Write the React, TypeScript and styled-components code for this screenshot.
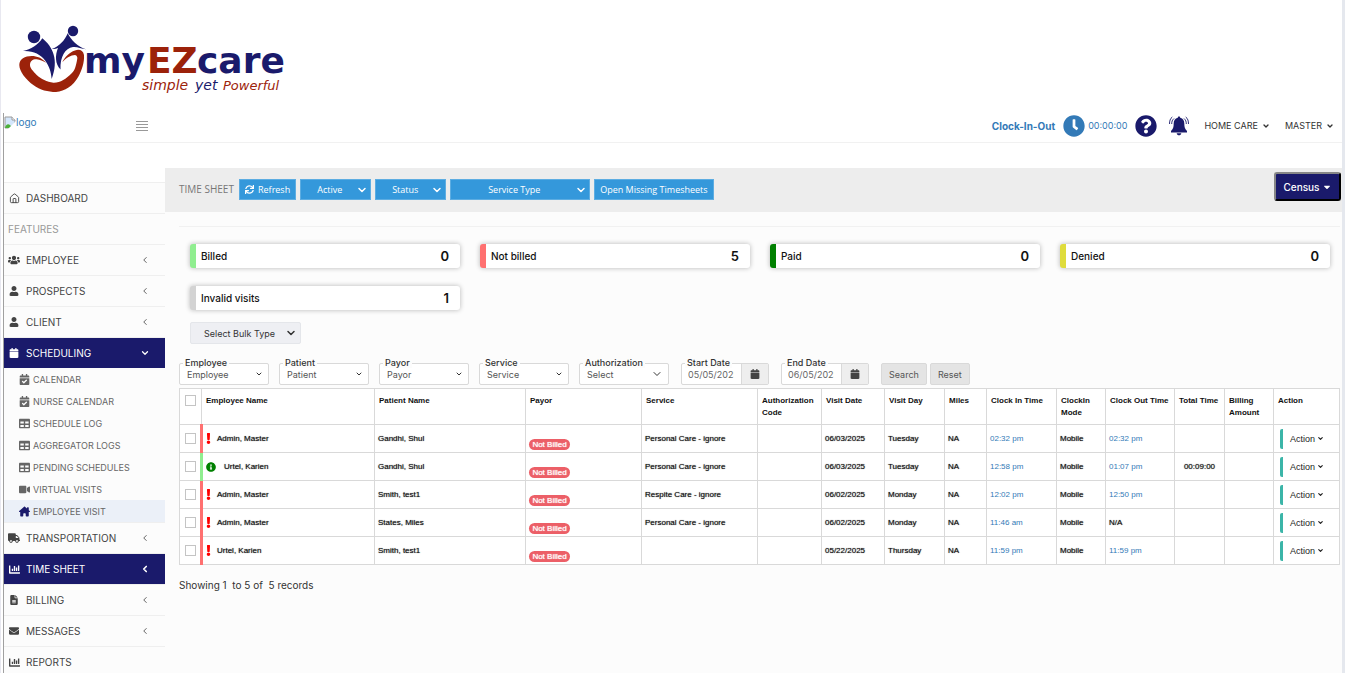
import React from "react";
import styled, { createGlobalStyle } from "styled-components";
import {
  FaUsers, FaUser, FaCalendar, FaCalendarCheck, FaTable, FaVideo, FaTruck, FaChartBar, FaEnvelope,
  FaClock, FaQuestionCircle, FaSync, FaExclamation, FaInfoCircle, FaCaretDown,
} from "react-icons/fa";
import { FaHouseChimney, FaFileLines } from "react-icons/fa6";
import { ChevronDown, ChevronLeft, House } from "lucide-react";

const ui = `Inter, "Open Sans", sans-serif`;
const navy = "#1a1a6b";
const line = "#d9d9d9";

const GlobalStyle = createGlobalStyle`
  *, *::before, *::after { box-sizing: border-box; }
  body { margin: 0; background: #fff; font-family: ${ui}; font-size: 10px; color: #333; }
  button, input, select { font-family: inherit; font-size: inherit; color: inherit; margin: 0; }
  a { color: inherit; text-decoration: none; }
  ul { list-style: none; margin: 0; padding: 0; }
  svg { display: block; flex: none; }
`;

const Page = styled.div`
  height: 100vh;
  overflow: hidden;
  display: flex;
  flex-direction: column;
  border-left: 1px solid #e8e8f0;
  border-right: 3px solid #e5e8ee;
`;
const Brand = styled.div`
  flex: none;
  height: 113px;
  padding: 20px 16px;
`;
const Frame = styled.div`
  flex: 1;
  min-height: 0;
  display: flex;
  flex-direction: column;
  margin-left: 2px;
  border-left: 1px solid #a0a0a0;
`;
const Header = styled.header`
  flex: none;
  height: 30px;
  display: flex;
  align-items: center;
  padding: 0 8px 4px 0;
  border-bottom: 1px solid #f1f1f1;
`;
const LogoLink = styled.a`
  display: flex;
  width: 132px;
  height: 20px;
  font-size: 10px;
  line-height: 13px;
  color: #337ab7;
`;
const MenuButton = styled.button`
  border: 0;
  padding: 0;
  background: none;
  margin-right: auto;
`;
const ClockLink = styled.a`
  display: flex;
  align-items: center;
  color: #337ab7;
  strong { margin-right: 8px; }
  span { margin-left: 3px; font-size: 9px; }
`;
const IconButton = styled.button<{ $gap: number }>`
  border: 0;
  padding: 0;
  background: none;
  color: ${navy};
  margin-left: ${(p) => p.$gap}px;
`;
const HeaderMenu = styled.button`
  display: flex;
  align-items: center;
  gap: 4px;
  border: 0;
  padding: 0;
  background: none;
  font-size: 9px;
  margin-left: 15px;
`;

const Body = styled.div`
  flex: 1;
  min-height: 0;
  display: flex;
`;
const Sidebar = styled.nav`
  flex: none;
  width: 161px;
  padding-top: 39px;
  overflow: hidden;
  background: linear-gradient(#fff 39px, #fcfcfc 39px);
`;
const NavItem = styled.a<{ $active?: boolean }>`
  display: flex;
  align-items: center;
  height: 31px;
  padding: 0 15px 0 4px;
  border-top: 1px solid #efefef;
  color: ${(p) => (p.$active ? "#fff" : "#444")};
  background: ${(p) => (p.$active ? navy : "transparent")};
  span { flex: 1; margin-left: 6px; }
`;
const NavIcon = styled.i`
  width: 12px;
  display: flex;
  justify-content: center;
`;
const Section = styled.div`
  height: 31px;
  line-height: 31px;
  padding-left: 4px;
  border-top: 1px solid #efefef;
  color: #999;
`;
const SubItem = styled.a<{ $active?: boolean }>`
  display: flex;
  align-items: center;
  gap: 3px;
  height: 22px;
  padding-left: 15px;
  font-size: 9px;
  color: #666;
  background: ${(p) => (p.$active ? "#ebf0f8" : "transparent")};
  svg { width: 11px; height: 11px; color: ${(p) => (p.$active ? navy : "#666")}; }
`;

const Main = styled.main`
  flex: 1;
  min-width: 0;
  margin-top: 25px;
  background: #fcfcfc;
`;
const TitleBar = styled.div`
  height: 44px;
  display: flex;
  gap: 4px;
  padding: 4px 1px 0 14px;
  background: #ededed;
  font-family: "Open Sans", sans-serif;
`;
const Title = styled.h1`
  width: 56px;
  margin: 0;
  font-size: 10px;
  line-height: 34px;
  font-weight: 400;
  white-space: nowrap;
  color: #777;
`;
const BlueButton = styled.button`
  display: flex;
  align-items: center;
  gap: 4px;
  height: 21px;
  margin-top: 7px;
  padding: 0 5px;
  border: 1px solid #5dade2;
  background: #3498db;
  color: #fff;
  font-size: 9px;
  white-space: nowrap;
`;
const SelectBox = styled.div`
  display: grid;
  align-items: center;
  > * { grid-area: 1 / 1; }
  > svg { justify-self: end; margin-right: 5px; pointer-events: none; }
  select { appearance: none; width: 100%; height: 100%; border: 0; background: none; border-radius: 2px; outline: 0; }
`;
const BlueSelect = styled(SelectBox)<{ $width: number; $pad: number }>`
  width: ${(p) => p.$width}px;
  height: 21px;
  margin-top: 7px;
  background: #3498db;
  color: #fff;
  border: 1px solid #5dade2;
  > svg { margin-right: 2px; }
  select { padding: 0 0 0 ${(p) => p.$pad}px; font-size: 9px; option { color: #333; } }
`;
const CensusButton = styled.button`
  display: flex;
  align-items: center;
  justify-content: center;
  gap: 2px;
  width: 67px;
  height: 29px;
  margin-left: auto;
  border: 2px outset #333;
  border-radius: 3px;
  background: ${navy};
  color: #fff;
  font-family: ${ui};
  font-weight: 500;
`;
const Content = styled.div`
  margin: 14px 2px 0 14px;
  border-top: 1px solid #f1f1f1;
`;
const Cards = styled.div`
  display: grid;
  grid-template-columns: repeat(4, 1fr);
  gap: 18px 20px;
  padding: 17px 10px 0 11px;
`;
const Card = styled.div<{ $color: string }>`
  display: flex;
  align-items: center;
  justify-content: space-between;
  height: 24px;
  padding: 0 11px 0 5px;
  border-left: 6px solid ${(p) => p.$color};
  border-radius: 3px;
  background: #fff;
  box-shadow: 0 0 5px #b5b5b5;
  color: #111;
  font-weight: 500;
  strong { font-size: 13px; font-weight: 600; }
`;
const BulkSelect = styled(SelectBox)`
  width: 111px;
  height: 22px;
  margin: 12px 0 0 11px;
  border: 1px solid #e4e6ea;
  border-radius: 2px;
  background: #eeeff3;
  select { padding: 0 0 0 13px; font-size: 9px; }
  > svg { margin-right: 3px; }
`;
const Filters = styled.form`
  display: flex;
  gap: 12px;
  margin-top: 19px;
`;
const FilterGroup = styled.div<{ $gap: number }>`
  display: flex;
  gap: ${(p) => p.$gap}px;
`;
const Field = styled.div<{ $width: number }>`
  position: relative;
  width: ${(p) => p.$width}px;
  height: 22px;
  border: 1px solid ${line};
  border-radius: 2px;
  background: #fff;
  > label {
    position: absolute;
    top: -7px;
    left: 3px;
    padding: 0 2px;
    background: #fcfcfc;
    font-size: 9px;
    line-height: 11px;
    font-weight: 500;
    white-space: nowrap;
  }
  ${SelectBox} { height: 100%; }
  select { padding: 0 0 0 7px; font-size: 9px; color: #555; }
`;
const DateBox = styled.div`
  display: flex;
  height: 100%;
  input { flex: 1; min-width: 0; border: 0; padding: 0 7px 0 6px; background: none; font-size: 9px; color: #666; }
  button { width: 27px; border: 0; border-left: 1px solid ${line}; background: #eee; padding: 0 8px; color: #444; }
`;
const GreyButton = styled.button`
  height: 22px;
  padding: 0 7px;
  border: 1px solid ${line};
  border-radius: 2px;
  background: #e4e4e4;
  font-size: 9px;
  color: #555;
`;

const Table = styled.table`
  width: 100%;
  margin-top: 3px;
  table-layout: fixed;
  border-collapse: collapse;
  background: #fff;
  font-family: "Liberation Sans", Arial, sans-serif;
  font-size: 8px;
  line-height: 12px;
  color: #111;
  th, td { border: 1px solid ${line}; padding: 0 3px; text-align: left; }
  th { height: 36px; padding: 6px 4px 0; vertical-align: top; }
  th:first-child { padding: 6px 3px 0; }
  td { height: 28px; text-shadow: 0 0 1px #555; white-space: nowrap; }
  input { display: block; appearance: none; width: 11px; height: 11px; margin: 0 auto; border: 1px solid #c4c4c4; background: #fff; }
  a { color: #337ab7; text-shadow: none; }
`;
const NameCell = styled.td<{ $ok: boolean }>`
  && { border-left: 3px solid ${(p) => (p.$ok ? "#90ee90" : "#ff7070")}; }
  > div { display: flex; align-items: center; gap: ${(p) => (p.$ok ? 8 : 6)}px; }
  svg { width: ${(p) => (p.$ok ? 10 : 5)}px; color: ${(p) => (p.$ok ? "green" : "red")}; }
`;
const TotalCell = styled.td`
  && { text-align: center; }
`;
const Badge = styled.span`
  display: block;
  width: 41px;
  height: 11px;
  margin-top: 11px;
  border-radius: 6px;
  background: #ec5f67;
  color: #fff;
  line-height: 11px;
  text-align: center;
  text-shadow: 0 0 1px #fff;
`;
const ActionButton = styled.button`
  display: flex;
  align-items: center;
  gap: 2px;
  height: 20px;
  margin-left: 3px;
  padding: 0 0 0 7px;
  border: 0;
  border-left: 3px solid #3bb5a8;
  border-radius: 2px;
  background: none;
  font-size: 9px;
  color: #222;
`;
const Summary = styled.p`
  margin: 14px 0 0;
  line-height: 13px;
  font-size: 10px;
  white-space: pre;
`;

const BrandLogo = () => (
  <svg width="272" height="78" viewBox="0 0 272 78" role="img" aria-label="myEZcare">
    <g fill={navy}>
      <circle cx="17" cy="17" r="6.2" />
      <circle cx="56" cy="11" r="5.2" />
      <path d="M6 31C14 29.500 21 25 25.300 18.300C36 27 42 40 34.700 59C34 46 26 30 6 31Z" />
      <path d="M34.700 29C42 27 48 20 50.700 13.300C54 20 61 27 69 29.300C64 28.500 60 26.500 56 27C48 28 43 37 43.500 49.500C38 44 38 35 41 28C39 29 37 29.300 34.700 29Z" />
    </g>
    <path fill="#9c220a" d="M29 42.700C25 38 20 36 14.700 36C8 36 2.300 39 2.300 45C2.300 51 9 60 16.300 65C23 70 31 72 39 72C48 71 56 66 61.300 56.700C65 50 67.500 42 67 35C66 30 62 29 58 30.500C52 32.500 48 37 45.300 42.300C49 38 54 35 58 35C60 35.500 60.500 37 60.300 38.500C59 46 58 50 54.700 53.300C49 59 43 63 36.300 62.700C30 62 24 59 19.700 55C16 51 13 48 13 45C13 41 16 39 19.700 39.300C23 39.500 26 41 29 42.700Z" />
    <g fontFamily='"DejaVu Sans", sans-serif' fontWeight="700" fontSize="36">
      <text x="67" y="53" fill={navy}>my</text>
      <text x="130" y="53" fill="#9c220a">EZ</text>
      <text x="180" y="53" fill={navy}>care</text>
    </g>
    <g fontFamily='"DejaVu Sans", sans-serif' fontStyle="italic">
      <text x="125" y="70" fontSize="14" fill="#9c220a">simple</text>
      <text x="178" y="70" fontSize="14" fill={navy}>yet</text>
      <text x="206" y="70" fontSize="13" fill="#9c220a">Powerful</text>
    </g>
  </svg>
);

const BrokenImage = () => (
  <svg width="12" height="13" viewBox="0 0 12 13">
    <path d="M1 1H8L11 4V12H1Z" fill="#d4e6fb" stroke="#9a9a9a" />
    <path d="M1 12C2 7 6 7 8 12Z" fill="#4caf3a" />
    <path d="M12 5L4 13H12Z" fill="#fff" />
    <path d="M8 1V4H11" fill="#fff" stroke="#9a9a9a" />
  </svg>
);

const BellIcon = () => (
  <svg width="20" height="20" viewBox="0 0 20 20">
    <path fill={navy} d="M10 0.5C10.8 0.5 11.2 1 11.2 1.7C14 2.3 15.3 4.500 15.300 7.500C15.300 11.500 16 13 18 15V16.500H2V15C4 13 4.700 11.500 4.700 7.500C4.700 4.500 6 2.300 8.800 1.700C8.800 1 9.200 0.500 10 0.500ZM7.700 17.300H12.300C12 20 8 20 7.700 17.300Z" />
    <path fill="none" stroke={navy} strokeWidth="0.9" d="M3.300 1C1.200 2.500 0.500 5 0.500 8M5 2.500C3.300 4 2.700 5.500 2.700 8M16.700 1C18.800 2.500 19.500 5 19.500 8M15 2.500C16.700 4 17.300 5.500 17.300 8" />
  </svg>
);

type NavEntry = { label: string; icon: React.ReactNode; open?: boolean; active?: boolean; plain?: boolean };

const Nav = ({ label, icon, open, active, plain }: NavEntry) => (
  <NavItem href="#" $active={active}>
    <NavIcon>{icon}</NavIcon>
    <span>{label}</span>
    {plain ? null : open ? <ChevronDown size={10} strokeWidth={3} /> : <ChevronLeft size={10} strokeWidth={active ? 4 : 2} />}
  </NavItem>
);

const subItems: [string, React.ReactNode][] = [
  ["CALENDAR", <FaCalendarCheck />],
  ["NURSE CALENDAR", <FaCalendarCheck />],
  ["SCHEDULE LOG", <FaTable />],
  ["AGGREGATOR LOGS", <FaTable />],
  ["PENDING SCHEDULES", <FaTable />],
  ["VIRTUAL VISITS", <FaVideo />],
  ["EMPLOYEE VISIT", <FaHouseChimney />],
];

const cards: [string, number, string][] = [
  ["Billed", 0, "#90ee90"],
  ["Not billed", 5, "#ff7070"],
  ["Paid", 0, "#008000"],
  ["Denied", 0, "#dfdc3c"],
  ["Invalid visits", 1, "#d3d3d3"],
];

const columns: [string, number | undefined][] = [
  ["Employee Name", undefined], ["Patient Name", 151], ["Payor", 116], ["Service", 116],
  ["Authorization Code", 64], ["Visit Date", 63], ["Visit Day", 60], ["Miles", 42],
  ["Clock In Time", 70], ["ClockIn Mode", 49], ["Clock Out Time", 69], ["Total Time", 50],
  ["Billing Amount", 49], ["Action", 66],
];

const visits = [
  { name: "Admin, Master", patient: "Gandhi, Shul", service: "Personal Care - ignore", date: "06/03/2025", day: "Tuesday", start: "02:32 pm", end: "02:32 pm", total: "", ok: false },
  { name: "Urtel, Karien", patient: "Gandhi, Shul", service: "Personal Care - ignore", date: "06/03/2025", day: "Tuesday", start: "12:58 pm", end: "01:07 pm", total: "00:09:00", ok: true },
  { name: "Admin, Master", patient: "Smith, test1", service: "Respite Care - ignore", date: "06/02/2025", day: "Monday", start: "12:02 pm", end: "12:50 pm", total: "", ok: false },
  { name: "Admin, Master", patient: "States, Miles", service: "Personal Care - ignore", date: "06/02/2025", day: "Monday", start: "11:46 am", end: "N/A", total: "", ok: false },
  { name: "Urtel, Karien", patient: "Smith, test1", service: "", date: "05/22/2025", day: "Thursday", start: "11:59 pm", end: "11:59 pm", total: "", ok: false },
];

const ToolbarSelect = ({ label, width, pad }: { label: string; width: number; pad: number }) => (
  <BlueSelect $width={width} $pad={pad}>
    <select aria-label={label}><option>{label}</option></select>
    <ChevronDown size={12} strokeWidth={3} />
  </BlueSelect>
);

const SelectField = ({ label, value }: { label: string; value: string }) => (
  <Field $width={90}>
    <SelectBox>
      <select id={label}><option>{value}</option></select>
      <ChevronDown size={value === "Select" ? 12 : 8} strokeWidth={value === "Select" ? 2 : 3} />
    </SelectBox>
    <label htmlFor={label}>{label}</label>
  </Field>
);

const DateField = ({ label, value }: { label: string; value: string }) => (
  <Field $width={88}>
    <DateBox>
      <input id={label} type="text" defaultValue={value} />
      <button type="button" aria-label={`Pick ${label}`}><FaCalendar size={10} /></button>
    </DateBox>
    <label htmlFor={label}>{label}</label>
  </Field>
);

export default function App() {
  return (
    <Page>
      <GlobalStyle />
      <Brand><BrandLogo /></Brand>
      <Frame>
        <Header>
          <LogoLink href="#"><BrokenImage />logo</LogoLink>
          <MenuButton aria-label="Toggle menu">
            <svg width="12" height="10" viewBox="0 0 12 10" stroke="#999"><path d="M0 .5H12M0 3.500H12M0 6.500H12M0 9.500H12" /></svg>
          </MenuButton>
          <ClockLink href="#">
            <strong>Clock-In-Out</strong><FaClock size={22} /><span>00:00:00</span>
          </ClockLink>
          <IconButton $gap={8} aria-label="Help"><FaQuestionCircle size={22} /></IconButton>
          <IconButton $gap={12} aria-label="Notifications"><BellIcon /></IconButton>
          <HeaderMenu>HOME CARE <ChevronDown size={8} strokeWidth={4} /></HeaderMenu>
          <HeaderMenu>MASTER <ChevronDown size={8} strokeWidth={4} /></HeaderMenu>
        </Header>
        <Body>
          <Sidebar>
            <Nav label="DASHBOARD" icon={<House size={11} />} plain />
            <Section>FEATURES</Section>
            <Nav label="EMPLOYEE" icon={<FaUsers size={12} />} />
            <Nav label="PROSPECTS" icon={<FaUser size={10} />} />
            <Nav label="CLIENT" icon={<FaUser size={10} />} />
            <Nav label="SCHEDULING" icon={<FaCalendar size={10} />} open active />
            <ul>
              {subItems.map(([label, icon]) => (
                <li key={label}><SubItem href="#" $active={label === "EMPLOYEE VISIT"}>{icon}{label}</SubItem></li>
              ))}
            </ul>
            <Nav label="TRANSPORTATION" icon={<FaTruck size={12} />} />
            <Nav label="TIME SHEET" icon={<FaChartBar size={11} />} active />
            <Nav label="BILLING" icon={<FaFileLines size={10} />} />
            <Nav label="MESSAGES" icon={<FaEnvelope size={10} />} />
            <Nav label="REPORTS" icon={<FaChartBar size={11} />} plain />
          </Sidebar>
          <Main>
            <TitleBar>
              <Title>TIME SHEET</Title>
              <BlueButton><FaSync size={9} />Refresh</BlueButton>
              <ToolbarSelect label="Active" width={71} pad={16} />
              <ToolbarSelect label="Status" width={71} pad={16} />
              <ToolbarSelect label="Service Type" width={140} pad={37} />
              <BlueButton>Open Missing Timesheets</BlueButton>
              <CensusButton>Census<FaCaretDown size={10} /></CensusButton>
            </TitleBar>
            <Content>
              <Cards>
                {cards.map(([label, count, color]) => (
                  <Card key={label} $color={color}>{label}<strong>{count}</strong></Card>
                ))}
              </Cards>
              <BulkSelect>
                <select aria-label="Bulk type"><option>Select Bulk Type</option></select>
                <ChevronDown size={12} strokeWidth={3} />
              </BulkSelect>
              <Filters>
                <FilterGroup $gap={10}>
                  <SelectField label="Employee" value="Employee" />
                  <SelectField label="Patient" value="Patient" />
                  <SelectField label="Payor" value="Payor" />
                  <SelectField label="Service" value="Service" />
                  <SelectField label="Authorization" value="Select" />
                </FilterGroup>
                <FilterGroup $gap={12}>
                  <DateField label="Start Date" value="05/05/2025" />
                  <DateField label="End Date" value="06/05/2025" />
                </FilterGroup>
                <FilterGroup $gap={3}>
                  <GreyButton type="button">Search</GreyButton>
                  <GreyButton type="button">Reset</GreyButton>
                </FilterGroup>
              </Filters>
              <Table>
                <colgroup>
                  <col width={22} />
                  {columns.map(([label, width]) => <col key={label} width={width} />)}
                </colgroup>
                <thead>
                  <tr>
                    <th><input type="checkbox" aria-label="Select all" /></th>
                    {columns.map(([label]) => <th key={label}>{label}</th>)}
                  </tr>
                </thead>
                <tbody>
                  {visits.map((v, i) => (
                    <tr key={i}>
                      <td><input type="checkbox" aria-label={`Select ${v.name}`} /></td>
                      <NameCell $ok={v.ok}>
                        <div>
                          {v.ok ? <FaInfoCircle size={10} /> : <FaExclamation size={11} />}
                          {v.name}
                        </div>
                      </NameCell>
                      <td>{v.patient}</td>
                      <td><Badge>Not Billed</Badge></td>
                      <td>{v.service}</td>
                      <td />
                      <td>{v.date}</td>
                      <td>{v.day}</td>
                      <td>NA</td>
                      <td><a href="#">{v.start}</a></td>
                      <td>Mobile</td>
                      <td>{v.end === "N/A" ? v.end : <a href="#">{v.end}</a>}</td>
                      <TotalCell>{v.total}</TotalCell>
                      <td />
                      <td><ActionButton>Action<ChevronDown size={7} strokeWidth={4} /></ActionButton></td>
                    </tr>
                  ))}
                </tbody>
              </Table>
              <Summary>{"Showing 1  to 5 of  5 records"}</Summary>
            </Content>
          </Main>
        </Body>
      </Frame>
    </Page>
  );
}
